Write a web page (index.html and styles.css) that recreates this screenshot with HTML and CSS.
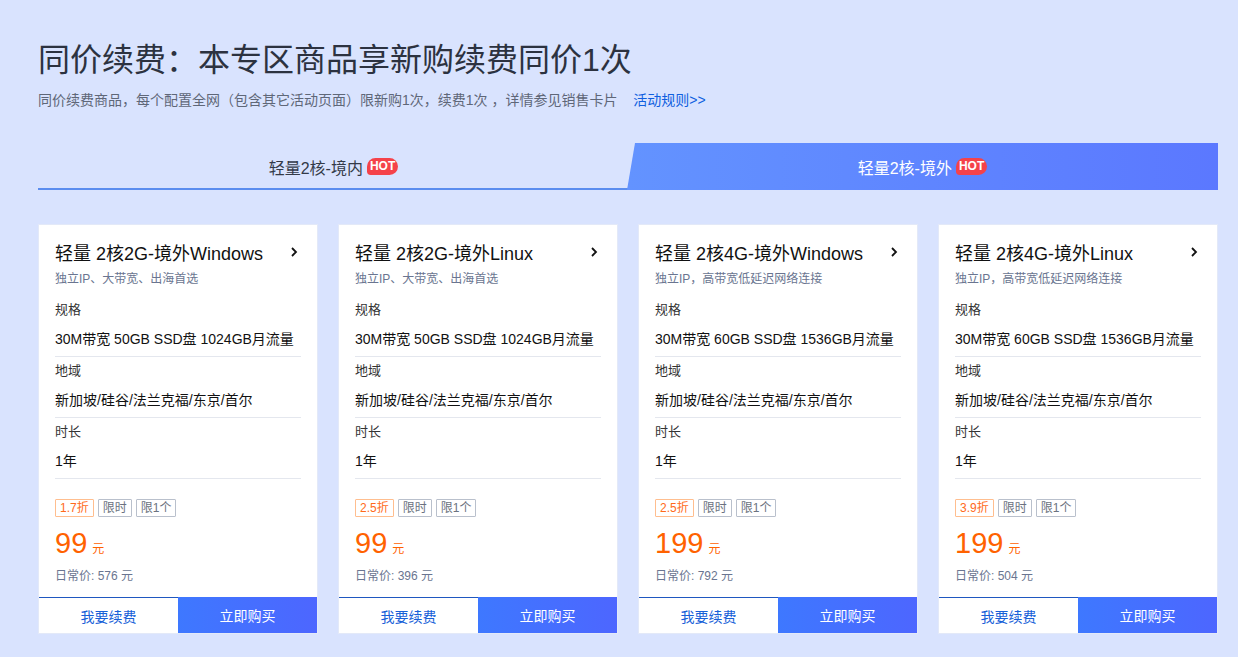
FILE: index.html
```html
<!DOCTYPE html>
<html lang="zh-CN">
<head>
<meta charset="utf-8">
<title>同价续费</title>
<link rel="stylesheet" href="styles.css">
</head>
<body>
<div class="page">
  <h1 class="title">同价续费：本专区商品享新购续费同价1次</h1>
  <p class="subtitle">同价续费商品，每个配置全网（包含其它活动页面）限新购1次，续费1次 ，详情参见销售卡片 <a class="rule" href="#">活动规则&gt;&gt;</a></p>

  <div class="tabs">
    <div class="tab">轻量2核-境内<span class="hot">HOT</span></div>
    <div class="tab active">轻量2核-境外<span class="hot">HOT</span></div>
  </div>

  <div class="cards">
    <div class="card">
      <div class="card-body">
        <div class="card-head"><span class="card-title">轻量 2核2G-境外Windows</span><svg class="chev" width="10" height="12" viewBox="0 0 10 12"><path d="M3 2l4 4-4 4" fill="none" stroke="#111" stroke-width="1.8"/></svg></div>
        <div class="card-sub">独立IP、大带宽、出海首选</div>
        <div class="sec first"><div class="lbl">规格</div><div class="val">30M带宽 50GB SSD盘 1024GB月流量</div></div>
        <div class="sec"><div class="lbl">地域</div><div class="val">新加坡/硅谷/法兰克福/东京/首尔</div></div>
        <div class="sec"><div class="lbl">时长</div><div class="val">1年</div></div>
        <div class="tags"><span class="tag off">1.7折</span><span class="tag">限时</span><span class="tag">限1个</span></div>
        <div class="price"><span class="num">99</span><span class="unit">元</span></div>
        <div class="orig">日常价: 576 元</div>
      </div>
      <div class="btns"><a class="btn renew" href="#">我要续费</a><a class="btn buy" href="#">立即购买</a></div>
    </div>

    <div class="card">
      <div class="card-body">
        <div class="card-head"><span class="card-title">轻量 2核2G-境外Linux</span><svg class="chev" width="10" height="12" viewBox="0 0 10 12"><path d="M3 2l4 4-4 4" fill="none" stroke="#111" stroke-width="1.8"/></svg></div>
        <div class="card-sub">独立IP、大带宽、出海首选</div>
        <div class="sec first"><div class="lbl">规格</div><div class="val">30M带宽 50GB SSD盘 1024GB月流量</div></div>
        <div class="sec"><div class="lbl">地域</div><div class="val">新加坡/硅谷/法兰克福/东京/首尔</div></div>
        <div class="sec"><div class="lbl">时长</div><div class="val">1年</div></div>
        <div class="tags"><span class="tag off">2.5折</span><span class="tag">限时</span><span class="tag">限1个</span></div>
        <div class="price"><span class="num">99</span><span class="unit">元</span></div>
        <div class="orig">日常价: 396 元</div>
      </div>
      <div class="btns"><a class="btn renew" href="#">我要续费</a><a class="btn buy" href="#">立即购买</a></div>
    </div>

    <div class="card">
      <div class="card-body">
        <div class="card-head"><span class="card-title">轻量 2核4G-境外Windows</span><svg class="chev" width="10" height="12" viewBox="0 0 10 12"><path d="M3 2l4 4-4 4" fill="none" stroke="#111" stroke-width="1.8"/></svg></div>
        <div class="card-sub">独立IP，高带宽低延迟网络连接</div>
        <div class="sec first"><div class="lbl">规格</div><div class="val">30M带宽 60GB SSD盘 1536GB月流量</div></div>
        <div class="sec"><div class="lbl">地域</div><div class="val">新加坡/硅谷/法兰克福/东京/首尔</div></div>
        <div class="sec"><div class="lbl">时长</div><div class="val">1年</div></div>
        <div class="tags"><span class="tag off">2.5折</span><span class="tag">限时</span><span class="tag">限1个</span></div>
        <div class="price"><span class="num">199</span><span class="unit">元</span></div>
        <div class="orig">日常价: 792 元</div>
      </div>
      <div class="btns"><a class="btn renew" href="#">我要续费</a><a class="btn buy" href="#">立即购买</a></div>
    </div>

    <div class="card">
      <div class="card-body">
        <div class="card-head"><span class="card-title">轻量 2核4G-境外Linux</span><svg class="chev" width="10" height="12" viewBox="0 0 10 12"><path d="M3 2l4 4-4 4" fill="none" stroke="#111" stroke-width="1.8"/></svg></div>
        <div class="card-sub">独立IP，高带宽低延迟网络连接</div>
        <div class="sec first"><div class="lbl">规格</div><div class="val">30M带宽 60GB SSD盘 1536GB月流量</div></div>
        <div class="sec"><div class="lbl">地域</div><div class="val">新加坡/硅谷/法兰克福/东京/首尔</div></div>
        <div class="sec"><div class="lbl">时长</div><div class="val">1年</div></div>
        <div class="tags"><span class="tag off">3.9折</span><span class="tag">限时</span><span class="tag">限1个</span></div>
        <div class="price"><span class="num">199</span><span class="unit">元</span></div>
        <div class="orig">日常价: 504 元</div>
      </div>
      <div class="btns"><a class="btn renew" href="#">我要续费</a><a class="btn buy" href="#">立即购买</a></div>
    </div>
  </div>
</div>
</body>
</html>
```

FILE: styles.css
```css
* { box-sizing: border-box; }
html, body { margin: 0; padding: 0; }
body {
  background: #d9e3fe;
  font-family: "Liberation Sans", "Noto Sans CJK SC", sans-serif;
  color: #333;
  width: 1238px;
  height: 657px;
  overflow: hidden;
}
.page {
  padding: 40px 20px 0 38px;
  width: 1238px;
}
.title {
  margin: 0;
  font-size: 32px;
  line-height: 40px;
  font-weight: normal;
  color: #2c3240;
}
.subtitle {
  margin: 10px 0 0;
  font-size: 14px;
  line-height: 20px;
  color: #5f6778;
}
.rule {
  color: #0f5fe0;
  text-decoration: none;
  margin-left: 12px;
}
.tabs {
  margin-top: 33px;
  width: 1180px;
  height: 47px;
  display: flex;
}
.tab {
  flex: 1;
  display: flex;
  align-items: center;
  justify-content: center;
  padding-top: 2px;
  font-size: 16px;
  color: #333a48;
  border-bottom: 2px solid #5b8def;
}
.tab.active {
  color: #fff;
  border-bottom: none;
  margin-left: -2px;
  padding-top: 0;
  background: linear-gradient(90deg, #6393ff, #5b78ff);
  clip-path: polygon(8px 0, 100% 0, 100% 100%, 0 100%);
}
.hot {
  display: inline-block;
  margin-left: 4px;
  height: 17px;
  line-height: 17px;
  padding: 0 3px;
  font-size: 12px;
  font-weight: bold;
  color: #fff;
  background: #f5424a;
  border-radius: 9px 9px 9px 4px;
  font-family: "Liberation Sans Narrow", "Liberation Sans", sans-serif;
}
.cards {
  margin-top: 34px;
  width: 1180px;
  display: grid;
  grid-template-columns: repeat(4, 280px);
  gap: 20px;
}
.card {
  background: #fff;
  border: 1px solid #e3e9f8;
  height: 410px;
  display: flex;
  flex-direction: column;
}
.card-body {
  flex: 1;
  padding: 15px 16px 0 16px;
}
.card-head {
  display: flex;
  align-items: center;
  justify-content: space-between;
  height: 24px;
}
.card-title {
  font-size: 18px;
  color: #111;
}
.chev { margin-right: 2px; }
.card-sub {
  margin-top: 7px;
  font-size: 12px;
  line-height: 16px;
  color: #6a7590;
}
.sec {
  padding: 6px 0 7px;
  border-bottom: 1px solid #e4e7ee;
}
.sec.first { padding-top: 15px; }
.lbl {
  font-size: 13px;
  line-height: 16px;
  color: #333;
}
.val {
  margin-top: 11px;
  font-size: 14px;
  line-height: 20px;
  color: #111;
}
.tags {
  margin-top: 20px;
  display: flex;
  gap: 4px;
}
.tag {
  display: inline-block;
  height: 18px;
  line-height: 16px;
  padding: 0 4px;
  font-size: 12px;
  border: 1px solid #b9c0cc;
  color: #6b7280;
  border-radius: 1px;
}
.tag.off {
  border-color: #ffbe8f;
  color: #ff6a1a;
}
.price {
  margin-top: 8px;
  height: 36px;
  display: flex;
  align-items: baseline;
  color: #ff6200;
}
.price .num {
  font-size: 29px;
  line-height: 36px;
}
.price .unit {
  font-size: 12px;
  margin-left: 5px;
}
.orig {
  margin-top: 6px;
  font-size: 12px;
  line-height: 18px;
  color: #6a7590;
}
.btns {
  display: flex;
  height: 36px;
}
.btn {
  flex: 1;
  display: flex;
  align-items: center;
  justify-content: center;
  font-size: 14px;
  text-decoration: none;
}
.btn.renew {
  color: #1660d8;
  background: #fff;
  border-top: 1px solid #1f57c0;
}
.btn.buy {
  color: #fff;
  background: linear-gradient(90deg, #3e78ff, #4d66ff);
}
```
